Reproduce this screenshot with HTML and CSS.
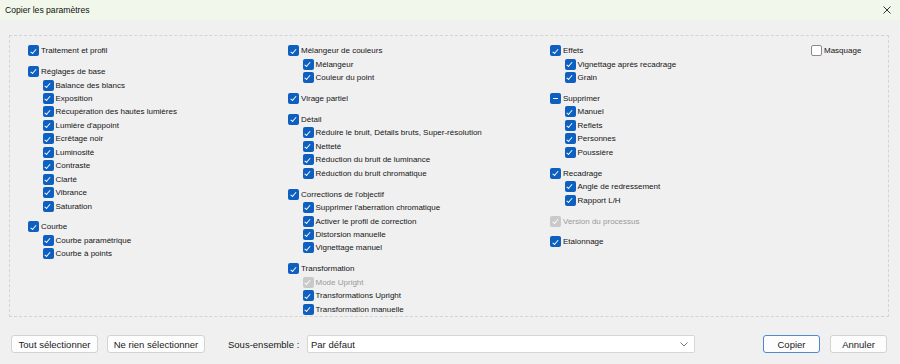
FILE: index.html
```html
<!DOCTYPE html>
<html lang="fr">
<head>
<meta charset="utf-8">
<title>Copier les paramètres</title>
<link rel="stylesheet" href="styles.css">
</head>
<body>
<div class="window">
  <div class="titlebar">
    <span class="title">Copier les paramètres</span>
    <svg class="close" width="8" height="8" viewBox="0 0 8 8"><path d="M0.5 0.5 L7.5 7.5 M7.5 0.5 L0.5 7.5" stroke="#333" stroke-width="1" fill="none"/></svg>
  </div>
  <div class="main">
    <div class="panel">
      <div class="col c1">
        <div class="group">
          <div class="row"><span class="cb on"></span>Traitement et profil</div>
        </div>
        <div class="group">
          <div class="row"><span class="cb on"></span>Réglages de base</div>
          <div class="row sub"><span class="cb on"></span>Balance des blancs</div>
          <div class="row sub"><span class="cb on"></span>Exposition</div>
          <div class="row sub"><span class="cb on"></span>Récupération des hautes lumières</div>
          <div class="row sub"><span class="cb on"></span>Lumière d'appoint</div>
          <div class="row sub"><span class="cb on"></span>Ecrêtage noir</div>
          <div class="row sub"><span class="cb on"></span>Luminosité</div>
          <div class="row sub"><span class="cb on"></span>Contraste</div>
          <div class="row sub"><span class="cb on"></span>Clarté</div>
          <div class="row sub"><span class="cb on"></span>Vibrance</div>
          <div class="row sub"><span class="cb on"></span>Saturation</div>
        </div>
        <div class="group">
          <div class="row"><span class="cb on"></span>Courbe</div>
          <div class="row sub"><span class="cb on"></span>Courbe paramétrique</div>
          <div class="row sub"><span class="cb on"></span>Courbe à points</div>
        </div>
      </div>
      <div class="col c2">
        <div class="group">
          <div class="row"><span class="cb on"></span>Mélangeur de couleurs</div>
          <div class="row sub"><span class="cb on"></span>Mélangeur</div>
          <div class="row sub"><span class="cb on"></span>Couleur du point</div>
        </div>
        <div class="group">
          <div class="row"><span class="cb on"></span>Virage partiel</div>
        </div>
        <div class="group">
          <div class="row"><span class="cb on"></span>Détail</div>
          <div class="row sub"><span class="cb on"></span>Réduire le bruit, Détails bruts, Super-résolution</div>
          <div class="row sub"><span class="cb on"></span>Netteté</div>
          <div class="row sub"><span class="cb on"></span>Réduction du bruit de luminance</div>
          <div class="row sub"><span class="cb on"></span>Réduction du bruit chromatique</div>
        </div>
        <div class="group">
          <div class="row"><span class="cb on"></span>Corrections de l'objectif</div>
          <div class="row sub"><span class="cb on"></span>Supprimer l'aberration chromatique</div>
          <div class="row sub"><span class="cb on"></span>Activer le profil de correction</div>
          <div class="row sub"><span class="cb on"></span>Distorsion manuelle</div>
          <div class="row sub"><span class="cb on"></span>Vignettage manuel</div>
        </div>
        <div class="group">
          <div class="row"><span class="cb on"></span>Transformation</div>
          <div class="row sub disabled"><span class="cb dis"></span>Mode Upright</div>
          <div class="row sub"><span class="cb on"></span>Transformations Upright</div>
          <div class="row sub"><span class="cb on"></span>Transformation manuelle</div>
        </div>
      </div>
      <div class="col c3">
        <div class="group">
          <div class="row"><span class="cb on"></span>Effets</div>
          <div class="row sub"><span class="cb on"></span>Vignettage après recadrage</div>
          <div class="row sub"><span class="cb on"></span>Grain</div>
        </div>
        <div class="group">
          <div class="row"><span class="cb mixed"></span>Supprimer</div>
          <div class="row sub"><span class="cb on"></span>Manuel</div>
          <div class="row sub"><span class="cb on"></span>Reflets</div>
          <div class="row sub"><span class="cb on"></span>Personnes</div>
          <div class="row sub"><span class="cb on"></span>Poussière</div>
        </div>
        <div class="group">
          <div class="row"><span class="cb on"></span>Recadrage</div>
          <div class="row sub"><span class="cb on"></span>Angle de redressement</div>
          <div class="row sub"><span class="cb on"></span>Rapport L/H</div>
        </div>
        <div class="group">
          <div class="row disabled"><span class="cb dis"></span>Version du processus</div>
        </div>
        <div class="group">
          <div class="row"><span class="cb on"></span>Etalonnage</div>
        </div>
      </div>
      <div class="col c4">
        <div class="group">
          <div class="row"><span class="cb off"></span>Masquage</div>
        </div>
      </div>
    </div>
  </div>
  <div class="footer">
    <button class="btn b1">Tout sélectionner</button>
    <button class="btn b2">Ne rien sélectionner</button>
    <span class="sublabel">Sous-ensemble :</span>
    <div class="select">
      <span>Par défaut</span>
      <svg width="8" height="5" viewBox="0 0 8 5"><path d="M0.5 0.5 L4 4 L7.5 0.5" stroke="#777" stroke-width="1" fill="none"/></svg>
    </div>
    <div class="spacer"></div>
    <button class="btn primary">Copier</button>
    <button class="btn">Annuler</button>
  </div>
</div>
</body>
</html>
```

FILE: styles.css
```css
* { box-sizing: border-box; }
html, body { margin: 0; padding: 0; }
body {
  background: #f0f0f0;
  font-family: "Liberation Sans", Arial, sans-serif;
  color: #1a1a1a;
  width: 900px;
  height: 364px;
  overflow: hidden;
}
.window { width: 900px; height: 364px; display: flex; flex-direction: column; }
.titlebar {
  height: 20px;
  background: #f1f7ea;
  display: flex;
  align-items: center;
  justify-content: space-between;
  padding: 0 9px 0 5px;
}
.title { font-size: 8.6px; color: #111; }
.close { display: block; }
.main { padding: 15px 11px 0 9px; }
.panel {
  height: 282px;
  border: 1px dashed #d4d4d4;
  display: grid;
  grid-template-columns: 260px 262px 261px 1fr;
  padding: 8px 0 0 18px;
  font-size: 8px;
}
.group { margin-bottom: 7.5px; }
.row {
  height: 13.45px;
  display: flex;
  align-items: center;
  white-space: nowrap;
  color: #151515;
}
.row.sub { padding-left: 14.5px; }
.row.disabled { color: #9a9a9a; }
.cb {
  width: 11px;
  height: 11px;
  border-radius: 2px;
  margin-right: 2px;
  flex: none;
  position: relative;
}
.cb.on, .cb.mixed { background: #0d5fc0; }
.cb.dis { background: #c9c9c9; }
.cb.off { background: #fff; border: 1px solid #8a8a8a; }
.cb.on::after, .cb.dis::after {
  content: "";
  position: absolute;
  left: 3.7px;
  top: 2.3px;
  width: 2.3px;
  height: 4.6px;
  border-right: 1px solid #fff;
  border-bottom: 1px solid #fff;
  transform: rotate(40deg);
}
.cb.mixed::after {
  content: "";
  position: absolute;
  left: 3px;
  top: 5px;
  width: 5px;
  height: 1px;
  background: #fff;
}
.footer {
  margin-top: 18px;
  display: flex;
  align-items: center;
  padding: 0 13px 0 11px;
  font-size: 9.5px;
}
.btn {
  font-family: "Liberation Sans", Arial, sans-serif;
  font-size: 9.5px;
  color: #1a1a1a;
  height: 18px;
  width: 57px;
  background: #fdfdfd;
  border: 1px solid #d2d2d2;
  border-radius: 3px;
  padding: 0;
  margin: 0;
}
.btn.b1 { width: 87px; }
.btn.b2 { width: 98px; margin-left: 9px; }
.btn.primary { border-color: #4f8bcb; margin-right: 10px; }
.sublabel { margin-left: 23px; width: 79px; }
.select {
  width: 388px;
  height: 18px;
  background: #fff;
  border: 1px solid #d6d6d6;
  border-radius: 2px;
  display: flex;
  align-items: center;
  justify-content: space-between;
  padding: 0 6px 0 3px;
}
.select svg { display: block; }
.spacer { flex: 1; }
```
